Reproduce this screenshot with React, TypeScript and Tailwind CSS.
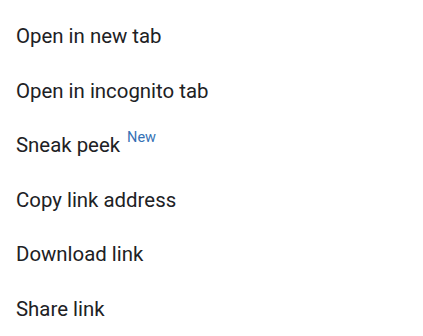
export default function App() {
  const items = [
    "Open in new tab",
    "Open in incognito tab",
    "Sneak peek",
    "Copy link address",
    "Download link",
    "Share link",
  ];
  return (
    <div className="w-[423px] h-[336px] bg-white overflow-hidden pt-[9px]" style={{ fontFamily: "Roboto, sans-serif" }}>
      {items.map((t) => (
        <div key={t} className="h-[54.6px] flex items-center pl-4 text-[20.4px] text-[#202124]">
          <span>{t}</span>
          {t === "Sneak peek" && (
            <span className="ml-[7px] -mt-[16px] text-[14.5px] text-[#3571b5]">New</span>
          )}
        </div>
      ))}
    </div>
  );
}
